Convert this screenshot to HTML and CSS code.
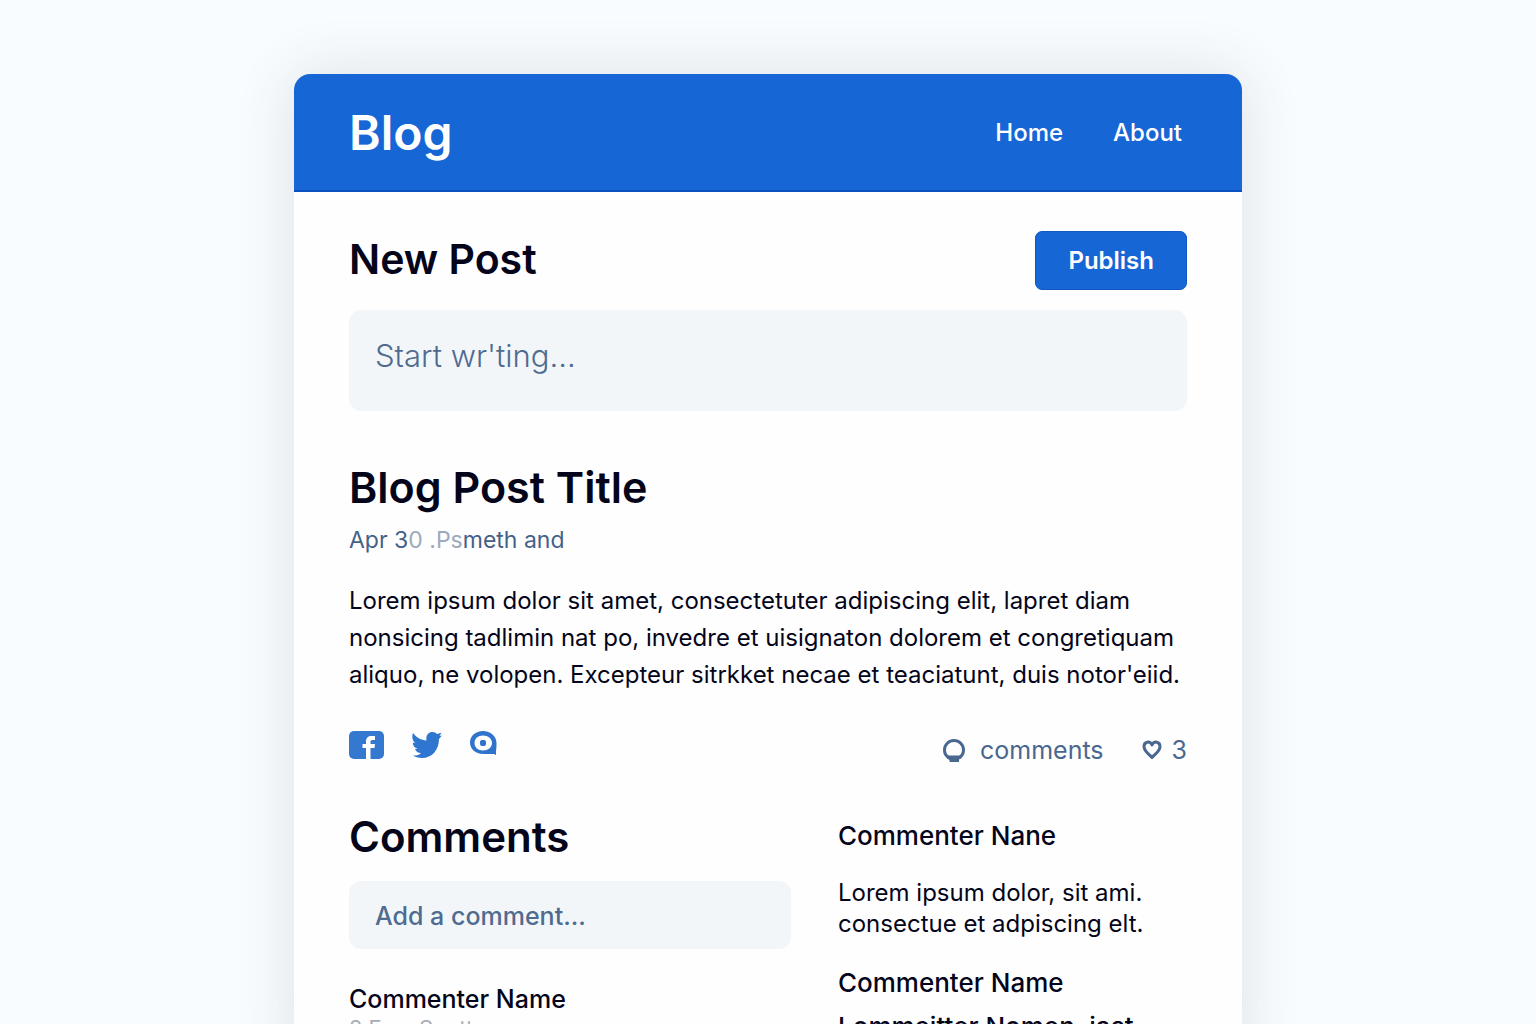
FILE: index.html
```html
<!DOCTYPE html>
<html lang="en">
<head>
    <meta charset="UTF-8">
    <meta name="viewport" content="width=device-width, initial-scale=1">
    <title>Blog</title>
    <link rel="stylesheet" href="styles.css">
</head>
<body>
    <div class="container">
        <header class="header">
            <h1 class="logo">Blog</h1>
            <nav class="nav">
                <a href="#">Home</a>
                <a href="#">About</a>
            </nav>
        </header>

        <main class="content">
            <form class="new-post">
                <div class="new-post-top">
                    <h2 class="new-post-title"><label for="postText">New Post</label></h2>
                    <button type="button" class="publish">Publish</button>
                </div>
                <textarea id="postText" class="post-text" placeholder="Start wr'ting..."></textarea>
            </form>

            <article class="post">
                <h2 class="post-title">Blog Post Title</h2>
                <p class="meta">Apr 3<span class="faded">0 .Ps</span>meth and</p>
                <p class="post-body">
                    Lorem ipsum dolor sit amet, consectetuter adipiscing elit, lapret diam<br>
                    nonsicing tadlimin nat po, invedre et uisignaton dolorem et congretiquam<br>
                    aliquo, ne volopen. Excepteur sitrkket necae et teaciatunt, duis notor'eiid.
                </p>
                <div class="post-footer">
                    <div class="share">
                        <a href="#" aria-label="Facebook">
                            <svg width="35" height="28" viewBox="0 0 35 28">
                                <rect width="35" height="28" rx="5" fill="#3578cf"/>
                                <path d="M17 28V17h-3.500v-4H17v-2.500C17 7 19 5 22.500 5H26v4h-2.500c-1.500 0-2 .7-2 2v2H26l-.5 4h-4v11z" fill="#fff"/>
                            </svg>
                        </a>
                        <a href="#" aria-label="Twitter">
                            <svg width="30" height="28" viewBox="0 0 30 28">
                                <path d="M1 2c4 5 8 7 13.500 7.500C13.500 4.500 16.500 1 20.500 1c2 0 3.500.8 4.500 2l4.500-1.200-2 3.200 2.500-.5-3 3.500C27 19 20 27 10 27c-4 0-7-1-9-2.500 3.500.2 6-.5 8-2.500-3 0-5-1.500-6-4h3C2.500 17 .8 14.500.8 11.500l2.700.7C.5 10-.5 6 1 2z" fill="#2f76d0"/>
                            </svg>
                        </a>
                        <a href="#" aria-label="Chat">
                            <svg width="27" height="24" viewBox="0 0 27 24">
                                <path fill-rule="evenodd" d="M13 0C5.500 0 0 5 0 11.500S5.500 23 13 23H24.500L26 24.500V19.500c.5-2 .5-4.500.5-7.500C26.500 5 20.500 0 13 0zM13 4.500c5 0 9 3 9 7.500s-4 7.500-9 7.500-8.500-3-8.500-7.500 3.500-7.500 8.500-7.500z" fill="#2f73cc"/>
                                <rect x="10" y="9" width="6" height="6" rx="2" fill="#2f73cc"/>
                            </svg>
                        </a>
                    </div>
                    <div class="stats">
                        <span class="stat comment-count">
                            <svg width="22" height="23" viewBox="0 0 22 23">
                                <path d="M5.500 18.500C3 16.800 1.500 14.200 1.500 11a9.500 9.500 0 0 1 19 0c0 3.200-1.500 5.800-4 7.500z" fill="none" stroke="#4a6790" stroke-width="3"/>
                                <path d="M3.500 16.500h15v2.500L16 20.500V23H6.500v-2L4 19.500z" fill="#4a6790"/>
                            </svg>
                            comments
                        </span>
                        <span class="stat">
                            <svg width="20" height="20" viewBox="0 0 20 20">
                                <path d="M10 17.500C7.500 14.500 2 11.500 2 6.500 2 1.500 8 .5 10 5c2-4.500 8-3.500 8 1.500 0 5-5.500 8-8 11z" fill="none" stroke="#4a6790" stroke-width="3" stroke-linejoin="round"/>
                            </svg>
                            3
                        </span>
                    </div>
                </div>
            </article>

            <section class="comments">
                <div class="comments-left">
                    <h2><label for="commentText">Comments</label></h2>
                    <input type="text" id="commentText" class="comment-text" placeholder="Add a comment...">
                    <h3>Commenter Name</h3>
                    <p class="date">2 Fem Sontt</p>
                </div>
                <div class="comments-right">
                    <div class="comment">
                        <h3>Commenter Nane</h3>
                        <p>Lorem ipsum dolor, sit ami.<br>consectue et adpiscing elt.</p>
                    </div>
                    <div class="comment compact">
                        <h3>Commenter Name</h3>
                        <p>Lommeitter Nomen, iast</p>
                    </div>
                </div>
            </section>
        </main>
    </div>
</body>
</html>
```
FILE: styles.css
```css
* {
    box-sizing: border-box;
}

body {
    margin: 0;
    padding: 74px 20px 0;
    background-color: #f9fcfe;
    font-family: Inter, "Liberation Sans", sans-serif;
    color: #04051a;
}

h1, h2, h3, p {
    margin: 0;
}

.container {
    max-width: 948px;
    margin: 0 auto;
    background-color: #fefefe;
    border-radius: 16px 16px 0 0;
    box-shadow: 0 0 60px rgba(50, 60, 75, 0.14);
}

.header {
    display: flex;
    justify-content: space-between;
    align-items: center;
    padding: 30px 60px 28px 55px;
    background-color: #1766d6;
    border-bottom: 2px solid #0b50bf;
    border-radius: 16px 16px 0 0;
    color: #fff;
}

.logo {
    font-size: 48px;
    line-height: 58px;
    font-weight: 600;
}

.nav {
    display: flex;
    gap: 50px;
}

.nav a {
    color: #fff;
    font-size: 24px;
    line-height: 30px;
    font-weight: 500;
    text-decoration: none;
}

.content {
    padding: 39px 55px 20px;
}

h2 {
    font-size: 42px;
    line-height: 52px;
    font-weight: 600;
}

.new-post-top {
    display: flex;
    justify-content: space-between;
    align-items: flex-start;
    margin-bottom: 20px;
}

.new-post-title {
    font-size: 41px;
    line-height: 56px;
}

.publish {
    height: 59px;
    padding: 0 32px;
    background-color: #1766d6;
    color: #fff;
    border: 1px solid #0f58c6;
    border-radius: 7px;
    font-family: inherit;
    font-size: 24px;
    font-weight: 600;
    cursor: pointer;
}

.post-text,
.comment-text {
    display: block;
    width: 100%;
    background-color: #f3f6f9;
    border: none;
    border-radius: 12px;
    font-family: inherit;
    color: #4a6488;
}

.post-text {
    height: 101px;
    padding: 26px;
    font-size: 31px;
    line-height: 40px;
    font-weight: 300;
    resize: none;
}

.post-text::placeholder,
.comment-text::placeholder {
    color: #4f6b90;
    opacity: 1;
}

.post {
    margin-top: 49px;
}

.post-title {
    font-size: 43px;
    line-height: 54px;
}

.meta {
    margin-top: 11px;
    font-size: 23px;
    line-height: 30px;
    color: #456187;
}

.faded {
    color: #9daabc;
}

.post-body {
    margin-top: 27px;
    font-size: 24px;
    line-height: 37px;
}

.post-footer {
    display: flex;
    justify-content: space-between;
    margin-top: 38px;
}

.share {
    display: flex;
    gap: 28px;
}

.share svg,
.stat svg {
    display: block;
}

.stats {
    display: flex;
    gap: 38px;
    padding-top: 4px;
}

.stat {
    display: flex;
    align-items: center;
    gap: 10px;
    font-size: 25px;
    line-height: 30px;
    color: #4a6790;
}

.comment-count {
    gap: 15px;
}

.comments {
    display: grid;
    grid-template-columns: 442fr 349fr;
    gap: 47px;
    margin-top: 46px;
}

.comment-text {
    height: 68px;
    margin: 18px 0 34px;
    padding: 2px 26px 0;
    font-size: 25px;
    font-weight: 500;
}

h3 {
    font-size: 25px;
    line-height: 32px;
    font-weight: 500;
}

.date {
    font-size: 22px;
    line-height: 26px;
    color: #a8adb5;
}

.comments-right {
    padding-top: 9px;
}

.comment h3 {
    font-size: 26px;
}

.comment p {
    margin-top: 25px;
    font-size: 24px;
    line-height: 31px;
}

.comment.compact {
    margin-top: 28px;
}

.comment.compact p {
    margin-top: 12px;
    font-size: 26px;
    font-weight: 500;
}
```
